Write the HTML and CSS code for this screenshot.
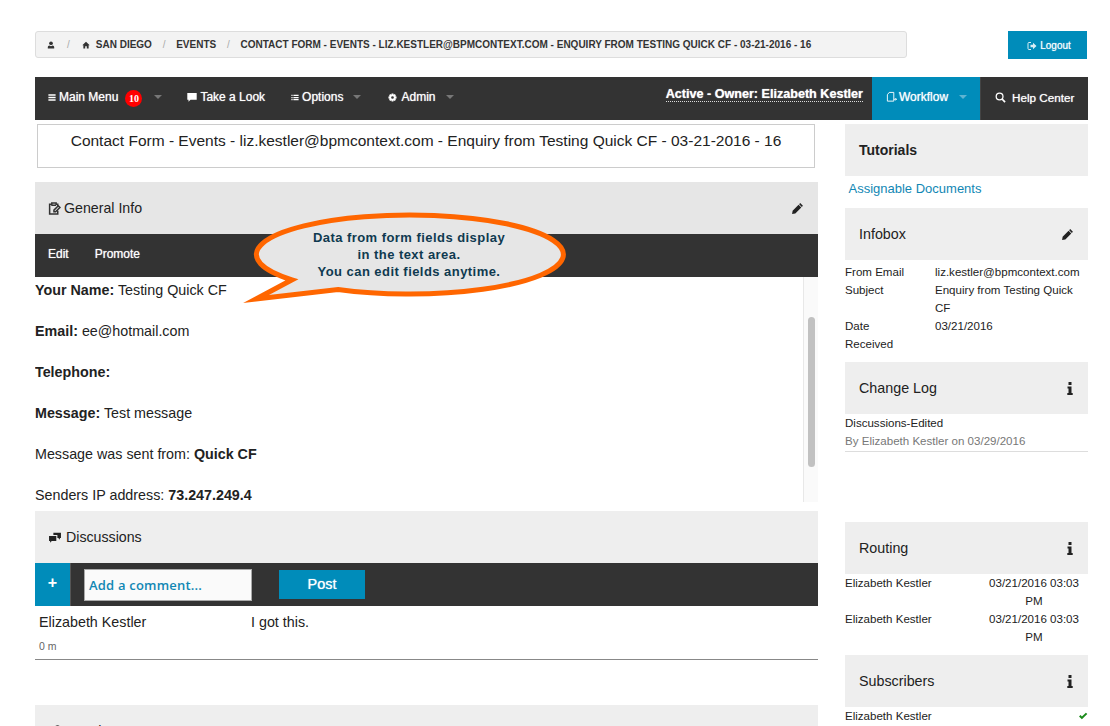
FILE: index.html
```html
<!DOCTYPE html>
<html lang="en">
<head>
<meta charset="utf-8">
<title>Contact Form</title>
<link rel="stylesheet" href="styles.css">
</head>
<body>
<div class="page">
  <header class="top">
    <nav class="crumbs">
      <svg class="ic" viewBox="0 0 10 10"><circle cx="5" cy="2.8" r="2.3"/><path d="M1 9.3V7.6Q1 6 3 5.6L5 6.6 7 5.6Q9 6 9 7.6V9.3Z"/></svg>
      <span class="sep sep-first">/</span>
      <svg class="ic" viewBox="0 0 10 10"><path d="M5 1 9.6 5.4H8.3V9.3H6V6.5H4V9.3H1.7V5.4H.4Z"/></svg>
      <a class="crumb">San Diego</a>
      <span class="sep">/</span>
      <a class="crumb">Events</a>
      <span class="sep">/</span>
      <a class="crumb">Contact Form - Events - liz.kestler@bpmcontext.com - Enquiry from Testing Quick CF - 03-21-2016 - 16</a>
    </nav>
    <a class="logout">
      <svg class="ic-l" viewBox="0 0 10 10"><path d="M4 1.5H2Q1 1.5 1 2.5V7.5Q1 8.5 2 8.5H4" fill="none" stroke="currentColor"/><path d="M3.5 3.8H6V1.8L9.5 5 6 8.2V6.2H3.5Z"/></svg>
      Logout
    </a>
  </header>

  <nav class="nav">
    <div class="nav-left">
      <a class="nav-item n1"><svg class="ic-n" viewBox="0 0 10 10" preserveAspectRatio="none"><path d="M.5 1.5H9.5V3H.5ZM.5 4.3H9.5V5.8H.5ZM.5 7H9.5V8.5H.5Z"/></svg>Main Menu<span class="badge">10</span><i class="caret"></i></a>
      <a class="nav-item n2"><svg class="ic-n" viewBox="0 0 10 10"><path d="M.3 1H9.7V7.7H3.5L1.5 9.7V7.7H.3Z"/></svg>Take a Look</a>
      <a class="nav-item n3"><svg class="ic-n" viewBox="0 0 10 10"><path d="M.5 1.5H2V3H.5ZM3 1.5H9.5V3H3ZM.5 4.3H2V5.8H.5ZM3 4.3H9.5V5.8H3ZM.5 7H2V8.5H.5ZM3 7H9.5V8.5H3Z"/></svg>Options<i class="caret"></i></a>
      <a class="nav-item n4"><svg class="ic-n" viewBox="0 0 10 10"><path fill-rule="evenodd" d="M4 .5H6L6.3 1.9 7.5 1.2 8.8 2.5 8.1 3.7 9.5 4V6L8.1 6.3 8.8 7.5 7.5 8.8 6.3 8.1 6 9.5H4L3.7 8.1 2.5 8.8 1.2 7.5 1.9 6.3.5 6V4L1.9 3.7 1.2 2.5 2.5 1.2 3.7 1.9ZM5 3.5A1.5 1.5 0 1 0 5 6.5 1.5 1.5 0 1 0 5 3.5Z"/></svg>Admin<i class="caret"></i></a>
    </div>
    <div class="nav-right">
      <span class="status">Active - Owner: Elizabeth Kestler</span>
      <a class="workflow"><svg class="ic-w" viewBox="0 0 12 12"><path d="M3.5 1H8.5V10.5H1.5V3.5ZM8.5 8.5H11.5M10.2 7.2 11.5 8.5 10.2 9.8" fill="none" stroke="currentColor"/></svg>Workflow<i class="caret"></i></a>
      <a class="help"><svg class="ic-s" viewBox="0 0 12 12"><circle cx="5" cy="5" r="3.7" fill="none" stroke="currentColor" stroke-width="1.4"/><path d="M7.8 7.8 11 11" stroke="currentColor" stroke-width="1.8"/></svg>Help Center</a>
    </div>
  </nav>

  <div class="columns">
    <main class="main">
      <h1 class="doc-title">Contact Form - Events - liz.kestler@bpmcontext.com - Enquiry from Testing Quick CF - 03-21-2016 - 16</h1>

      <section class="panel gen">
        <div class="head head-dark">
          <span class="head-title"><svg class="ic-h" viewBox="0 0 12 12"><path d="M9 4V2H7.5V1H3.5V2H1.5V11H9V8M3 3H7.5M9.5 3.5 11 5 7 9H5.5V7.5Z" fill="none" stroke="#333" stroke-width="1.4"/></svg>General Info</span>
          <svg class="pencil" viewBox="0 0 12 12"><path d="M8.5 1 11 3.5 10 4.5 7.5 2ZM7 2.5 9.5 5 4 10.5 1 11 1.5 8Z"/></svg>
        </div>
        <div class="bar bar-tools"><a class="tool">Edit</a><a class="tool">Promote</a></div>
        <div class="text-area">
          <div class="text-body">
            <p><b>Your Name:</b> Testing Quick CF</p>
            <p><b>Email:</b> ee@hotmail.com</p>
            <p><b>Telephone:</b></p>
            <p><b>Message:</b> Test message</p>
            <p>Message was sent from: <b>Quick CF</b></p>
            <p>Senders IP address: <b>73.247.249.4</b></p>
          </div>
          <div class="scroll"><div class="thumb"></div></div>
        </div>
        <div class="callout">
          <svg class="callout-shape" viewBox="0 0 325 95" aria-hidden="true"><path d="M11 88 47 68.8A153.5 39.5 0 1 1 93 78.4Z" fill="#e6e6e6" stroke="#f60" stroke-width="5" stroke-miterlimit="10"/></svg>
          <div class="callout-text">Data from form fields display<br>in the text area.<br>You can edit fields anytime.</div>
        </div>
      </section>

      <section class="panel disc">
        <div class="head"><span class="head-title"><svg class="ic-h ic-d" viewBox="0 0 12 12"><path d="M4.5 1.5H11.5V6.5H10.5V8L9 6.5H8.2V3.8H4.5ZM.5 4.5H7.2V9.2H3L1.5 10.8V9.2H.5Z" fill="#222"/></svg>Discussions</span></div>
        <div class="bar bar-post">
          <a class="plus">+</a>
          <div class="comment-input">Add a comment...</div>
          <a class="post">Post</a>
        </div>
        <div class="comment">
          <div class="comment-row"><span class="comment-name">Elizabeth Kestler</span><span>I got this.</span></div>
          <div class="comment-age">0 m</div>
        </div>
      </section>

      <section class="panel attach">
        <div class="head"><span class="head-title"><svg class="ic-h ic-d" viewBox="0 0 12 12"><path d="M2 6 6.5 1.5Q8.5 0 10 1.5T10 5.5L5 10.5Q3 12 2 10.5T2 7.5L7 3" fill="none" stroke="#333" stroke-width="1.2"/></svg>Attachments</span>
          <svg class="pencil" viewBox="0 0 12 12"><path d="M8.5 1 11 3.5 10 4.5 7.5 2ZM7 2.5 9.5 5 4 10.5 1 11 1.5 8Z"/></svg></div>
      </section>
    </main>

    <aside class="side">
      <div class="head side-head"><b class="side-title">Tutorials</b></div>
      <a class="side-link">Assignable Documents</a>

      <div class="head side-head"><span class="side-title">Infobox</span>
        <svg class="pencil" viewBox="0 0 12 12"><path d="M8.5 1 11 3.5 10 4.5 7.5 2ZM7 2.5 9.5 5 4 10.5 1 11 1.5 8Z"/></svg></div>
      <div class="info">
        <span class="lbl">From Email</span><span>liz.kestler@bpmcontext.com</span>
        <span class="lbl">Subject</span><span>Enquiry from Testing Quick CF</span>
        <span class="lbl">Date Received</span><span>03/21/2016</span>
      </div>

      <div class="head side-head"><span class="side-title">Change Log</span><svg class="i" viewBox="0 0 6 13"><path d="M1.5 0H4.5V3H1.5ZM.5 4.5H4.5V11H5.7V13H.3V11H1.5V6.5H.5Z"/></svg></div>
      <div class="log">
        <div>Discussions-Edited</div>
        <div class="muted">By Elizabeth Kestler on 03/29/2016</div>
      </div>

      <div class="head side-head routing"><span class="side-title">Routing</span><svg class="i" viewBox="0 0 6 13"><path d="M1.5 0H4.5V3H1.5ZM.5 4.5H4.5V11H5.7V13H.3V11H1.5V6.5H.5Z"/></svg></div>
      <div class="route">
        <span>Elizabeth Kestler</span><span class="when">03/21/2016 03:03 PM</span>
        <span>Elizabeth Kestler</span><span class="when">03/21/2016 03:03 PM</span>
      </div>

      <div class="head side-head"><span class="side-title">Subscribers</span><svg class="i" viewBox="0 0 6 13"><path d="M1.5 0H4.5V3H1.5ZM.5 4.5H4.5V11H5.7V13H.3V11H1.5V6.5H.5Z"/></svg></div>
      <div class="sub"><span>Elizabeth Kestler</span><svg class="check" viewBox="0 0 12 10"><path d="M1 5.5 3 3.8 4.6 5.5 9.6 .8 11.4 2.4 4.6 9.2Z"/></svg></div>
    </aside>
  </div>
</div>
</body>
</html>
```
FILE: styles.css
```css
* { box-sizing: border-box; }
html, body { margin: 0; height: 726px; overflow: hidden; background: #fff; }
body { font-family: "Liberation Sans", Arial, sans-serif; color: #222; }
svg { display: block; flex: none; fill: currentColor; }

.page { width: 1110px; height: 726px; padding: 31px 22px 0 35px; overflow: hidden; }

.top { display: flex; justify-content: space-between; align-items: flex-start; }
.crumbs { width: 872px; height: 27px; display: flex; align-items: center; padding: 0 0 0 11px; background: #f3f3f3; border: 1px solid #ddd; border-radius: 3px; font-size: 10px; font-weight: bold; color: #333; text-transform: uppercase; }
.ic { width: 8px; height: 8px; color: #333; }
.crumb { color: #333; white-space: nowrap; }
.sep { color: #aaa; font-weight: normal; margin: 0 10.75px; }
.sep-first { margin: 0 12px; }
.crumbs .ic + .crumb { margin-left: 6px; }
.logout { width: 79px; height: 28px; margin-right: 1px; background: #008cba; color: #fff; font-size: 10px; text-shadow: 0 0 1px rgba(255,255,255,.7); display: flex; align-items: center; justify-content: center; gap: 3px; padding: 1px 0 0 3px; }
.ic-l { width: 10px; height: 10px; opacity: .85; }

.nav { height: 43px; margin-top: 18px; background: #333; display: flex; justify-content: space-between; color: #fff; font-size: 12px; text-shadow: 0 0 1px rgba(255,255,255,.8); }
.nav-left { display: flex; align-items: center; padding-left: 13px; }
.nav-item { display: flex; align-items: center; white-space: nowrap; padding-bottom: 3px; }
.ic-n { width: 8px; height: 9px; margin-right: 3px; }
.badge { width: 17px; height: 17px; margin: 3px 0 0 7px; border-radius: 50%; background: #f00; font: bold 10px/18px "Liberation Serif", serif; text-align: center; text-shadow: none; }
.caret { width: 0; height: 0; margin-left: 12px; border: 4px solid transparent; border-top: 4px solid #777; border-bottom: 0; }
.workflow .caret { border-top-color: #5fb4d2; }
.n2 { margin-left: 25px; }
.n2 .ic-n { width: 10px; height: 10px; }
.n3 { margin-left: 26px; }
.n4 { margin-left: 27px; }
.n4 .ic-n { width: 9px; margin-right: 4px; }
.n3 .caret { margin-left: 10px; }
.n4 .caret { margin-left: 11px; }
.nav-right { display: flex; align-items: stretch; }
.status { align-self: flex-start; margin: 10px 9px 0 0; height: 15px; line-height: 14px; font-size: 12.6px; font-weight: bold; border-bottom: 1px dotted #ddd; white-space: nowrap; }
.workflow { width: 108px; background: #008cba; display: flex; align-items: center; padding: 0 0 3px 14px; white-space: nowrap; }
.ic-w { width: 11px; height: 12px; margin-right: 2px; }
.workflow .caret { margin-left: 11px; }
.help { width: 108px; display: flex; align-items: center; padding: 0 0 3px 14px; white-space: nowrap; border-left: 1px solid #444; font-size: 11.7px; }
.ic-s { width: 11px; height: 11px; margin-right: 6px; }

.columns { display: flex; gap: 27px; align-items: flex-start; }
.main { width: 783px; flex: none; }
.side { width: 243px; flex: none; padding-top: 4px; font-size: 11.55px; }

.doc-title { width: 778px; height: 44px; margin: 4px 0 14px 2px; padding-top: 7px; border: 1px solid #ccc; font-size: 15.5px; font-weight: normal; line-height: 18px; text-align: center; color: #222; white-space: nowrap; }

.head { height: 52px; background: #eee; display: flex; align-items: center; justify-content: space-between; }
.head-dark { background: #e6e6e6; }
.head-title { display: flex; align-items: center; font-size: 14.2px; padding-left: 13px; color: #222; }
.ic-h { width: 13px; height: 13px; margin-right: 3px; }
.ic-d { width: 14px; margin-right: 4px; }
.pencil { width: 13px; height: 13px; margin-right: 14px; color: #222; }

.bar { height: 43px; background: #333; display: flex; align-items: center; color: #fff; }
.bar-tools { padding: 0 0 4px 13px; gap: 26px; font-size: 12px; text-shadow: 0 0 1px rgba(255,255,255,.8); }

.panel { position: relative; }
.text-area { height: 225px; display: flex; justify-content: space-between; overflow: hidden; }
.text-body { font-size: 14.3px; line-height: 23px; padding-top: 2px; }
.text-body p { margin: 0 0 18px; height: 23px; }
.scroll { width: 15px; height: 100%; padding: 40px 3px 0 4px; background: #fafafa; border-left: 1px solid #e8e8e8; }
.thumb { height: 150px; border-radius: 4px; background: #c1c1c1; }

.callout { position: absolute; left: 210px; top: 29px; width: 325px; height: 95px; }
.callout-shape { width: 325px; height: 95px; overflow: visible; }
.callout-text { position: absolute; left: 10px; top: 18px; width: 308px; text-align: center; font-size: 13px; font-weight: bold; line-height: 17px; letter-spacing: .45px; color: #0f3a50; }

.disc { margin-top: 9px; }
.plus { width: 36px; height: 100%; background: #008cba; border-right: 1px solid #555; font-size: 16px; font-weight: bold; display: flex; align-items: center; justify-content: center; padding-bottom: 3px; }
.comment-input { width: 168px; height: 32px; margin-left: 13px; padding-left: 4px; background: #fafafa; border: 1px solid #aaa; color: #1187b4; font: 600 13px/30px "Open Sans", sans-serif; letter-spacing: .2px; }
.post { width: 86px; height: 29px; margin-left: 27px; background: #008cba; text-align: center; font-size: 14.5px; line-height: 28px; text-shadow: 0 0 1px rgba(255,255,255,.8); }
.comment { height: 54px; border-bottom: 1px solid #888; padding: 7px 0 0 4px; }
.comment-row { display: flex; font-size: 14.3px; line-height: 18px; }
.comment-name { width: 212px; }
.comment-age { margin-top: 9px; font-size: 10.5px; line-height: 12px; color: #666; }
.attach { margin-top: 45px; }

.side-title { padding-left: 14px; font-size: 14.3px; color: #222; }
b.side-title { font-size: 14px; }
.side-link { display: block; height: 32px; padding: 5px 0 0 3.5px; font-size: 13px; line-height: 16px; color: #1187b4; }
.i { width: 6px; height: 13px; margin-right: 15px; color: #222; }
.info { display: grid; grid-template-columns: 90px 148px; line-height: 18px; padding: 3px 0 9px; }
.lbl { padding-right: 28px; }
.log { height: 57px; line-height: 18px; }
.muted { height: 20px; color: #777; border-bottom: 1px solid #ddd; }
.routing { margin-top: 51px; }
.route { display: grid; grid-template-columns: 143px 92px; line-height: 18px; padding-bottom: 9px; }
.when { text-align: center; }
.sub { display: flex; justify-content: space-between; align-items: center; height: 18px; }
.check { width: 10px; height: 8px; color: #1a8a1a; }
```
